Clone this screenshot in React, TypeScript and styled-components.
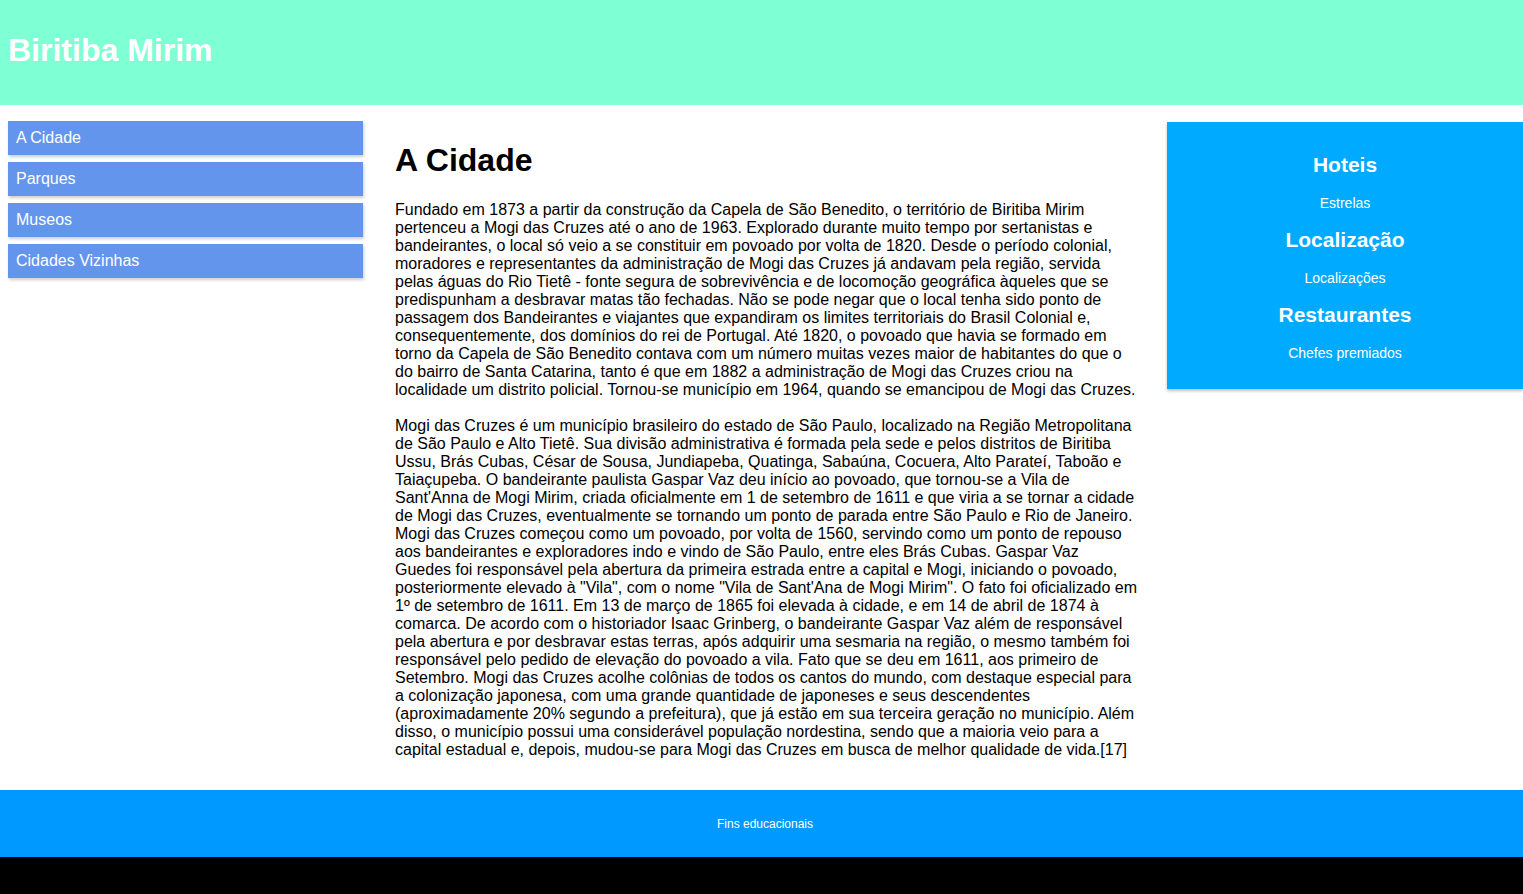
import { Fragment } from "react";
import styled, { createGlobalStyle } from "styled-components";

const GlobalStyle = createGlobalStyle`
  html {
    background-color: #000;
  }
  body {
    margin: 0;
    font-family: "Liberation Sans", Arial, sans-serif;
  }
`;

const Page = styled.div`
  background-color: #fff;
`;

const Header = styled.header`
  height: 105px;
  display: flex;
  align-items: center;
  padding-left: 8px;
  background-color: #7fffd4;
`;

const Title = styled.h1`
  margin: 0;
  color: #fff;
  font-size: 32px;
  font-weight: bold;
  padding-bottom: 4px;
`;

const Content = styled.div`
  display: grid;
  grid-template-columns: 355px 1fr 356px;
  align-items: start;
  padding: 16px 0 0 8px;
`;

const Nav = styled.nav`
  display: flex;
  flex-direction: column;
  gap: 7px;
`;

const NavItem = styled.a`
  display: block;
  padding: 8px 8px;
  line-height: 18px;
  font-size: 16px;
  color: #fff;
  background-color: #6495ed;
  box-shadow: 1px 2px 3px rgba(0, 0, 0, 0.2);
  text-decoration: none;
`;

const Main = styled.main`
  padding: 0 29px 31px 32px;
`;

const Heading = styled.h1`
  margin: 21px 0 22px;
  font-size: 32px;
  line-height: 37px;
  color: #000;
`;

const Text = styled.p`
  margin: 0;
  font-size: 16px;
  line-height: 18px;
  color: #000;

  & + & {
    margin-top: 18px;
  }
`;

const Aside = styled.aside`
  margin-top: 1px;
  padding: 31px 0 28px;
  display: flex;
  flex-direction: column;
  align-items: center;
  gap: 17.5px;
  background-color: #00aaff;
  color: #fff;
  box-shadow: 0 2px 3px rgba(0, 0, 0, 0.25);
`;

const AsideTitle = styled.h2`
  margin: 0;
  font-size: 21px;
  line-height: 24px;
  font-weight: bold;
`;

const AsideText = styled.p`
  margin: 0;
  font-size: 14px;
  line-height: 16px;
`;

const Footer = styled.footer`
  height: 67px;
  display: flex;
  align-items: center;
  justify-content: center;
  padding-left: 7px;
  background-color: #0099ff;
  color: #fff;
  font-size: 12px;
`;

const links = ["A Cidade", "Parques", "Museos", "Cidades Vizinhas"];

const extras = [
  { title: "Hoteis", text: "Estrelas" },
  { title: "Localização", text: "Localizações" },
  { title: "Restaurantes", text: "Chefes premiados" },
];

export default function App() {
  return (
    <Page>
      <GlobalStyle />
      <Header>
        <Title>Biritiba Mirim</Title>
      </Header>
      <Content>
        <Nav>
          {links.map((l) => (
            <NavItem key={l} href="#">
              {l}
            </NavItem>
          ))}
        </Nav>
        <Main>
          <Heading>A Cidade</Heading>
          <Text>
            Fundado em 1873 a partir da construção da Capela de São Benedito, o
            território de Biritiba Mirim pertenceu a Mogi das Cruzes até o ano de
            1963. Explorado durante muito tempo por sertanistas e bandeirantes, o
            local só veio a se constituir em povoado por volta de 1820. Desde o
            período colonial, moradores e representantes da administração de Mogi
            das Cruzes já andavam pela região, servida pelas águas do Rio Tietê -
            fonte segura de sobrevivência e de locomoção geográfica àqueles que se
            predispunham a desbravar matas tão fechadas. Não se pode negar que o
            local tenha sido ponto de passagem dos Bandeirantes e viajantes que
            expandiram os limites territoriais do Brasil Colonial e,
            consequentemente, dos domínios do rei de Portugal. Até 1820, o povoado
            que havia se formado em torno da Capela de São Benedito contava com um
            número muitas vezes maior de habitantes do que o do bairro de Santa
            Catarina, tanto é que em 1882 a administração de Mogi das Cruzes criou
            na localidade um distrito policial. Tornou-se município em 1964, quando
            se emancipou de Mogi das Cruzes.
          </Text>
          <Text>
            Mogi das Cruzes é um município brasileiro do estado de São Paulo,
            localizado na Região Metropolitana de São Paulo e Alto Tietê. Sua
            divisão administrativa é formada pela sede e pelos distritos de
            Biritiba Ussu, Brás Cubas, César de Sousa, Jundiapeba, Quatinga,
            Sabaúna, Cocuera, Alto Parateí, Taboão e Taiaçupeba. O bandeirante
            paulista Gaspar Vaz deu início ao povoado, que tornou-se a Vila de
            Sant'Anna de Mogi Mirim, criada oficialmente em 1 de setembro de 1611 e
            que viria a se tornar a cidade de Mogi das Cruzes, eventualmente se
            tornando um ponto de parada entre São Paulo e Rio de Janeiro. Mogi das
            Cruzes começou como um povoado, por volta de 1560, servindo como um
            ponto de repouso aos bandeirantes e exploradores indo e vindo de São
            Paulo, entre eles Brás Cubas. Gaspar Vaz Guedes foi responsável pela
            abertura da primeira estrada entre a capital e Mogi, iniciando o
            povoado, posteriormente elevado à "Vila", com o nome "Vila de Sant'Ana
            de Mogi Mirim". O fato foi oficializado em 1º de setembro de 1611. Em
            13 de março de 1865 foi elevada à cidade, e em 14 de abril de 1874 à
            comarca. De acordo com o historiador Isaac Grinberg, o bandeirante
            Gaspar Vaz além de responsável pela abertura e por desbravar estas
            terras, após adquirir uma sesmaria na região, o mesmo também foi
            responsável pelo pedido de elevação do povoado a vila. Fato que se deu
            em 1611, aos primeiro de Setembro. Mogi das Cruzes acolhe colônias de
            todos os cantos do mundo, com destaque especial para a colonização
            japonesa, com uma grande quantidade de japoneses e seus descendentes
            (aproximadamente 20% segundo a prefeitura), que já estão em sua
            terceira geração no município. Além disso, o município possui uma
            considerável população nordestina, sendo que a maioria veio para a
            capital estadual e, depois, mudou-se para Mogi das Cruzes em busca de
            melhor qualidade de vida.[17]
          </Text>
        </Main>
        <Aside>
          {extras.map((e) => (
            <Fragment key={e.title}>
              <AsideTitle>{e.title}</AsideTitle>
              <AsideText>{e.text}</AsideText>
            </Fragment>
          ))}
        </Aside>
      </Content>
      <Footer>Fins educacionais</Footer>
    </Page>
  );
}
